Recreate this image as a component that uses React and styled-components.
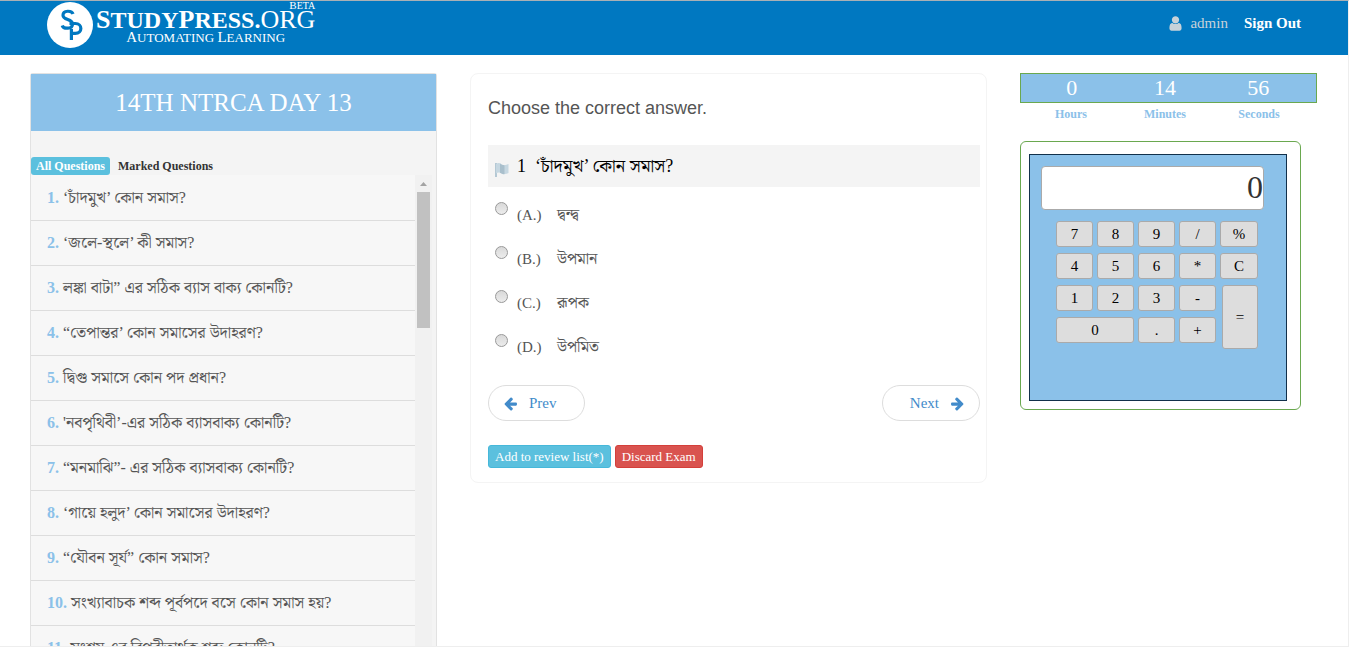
import React, { useState } from 'react';
import styled, { createGlobalStyle } from 'styled-components';

const SKY = '#8bc1e9';
const SERIF = '"Liberation Serif", "Noto Serif Bengali", "Noto Sans Bengali", "Noto Sans", serif';

const GlobalStyle = createGlobalStyle`
  *, *::before, *::after { box-sizing: border-box; }
  body { margin: 0; background: #fff; color: #555; font: 15px/20px ${SERIF}; }
  button, input { font-family: inherit; margin: 0; }
  button { cursor: pointer; }
  a { text-decoration: none; color: inherit; }
  ul, ol, fieldset { list-style: none; margin: 0; padding: 0; border: 0; min-width: 0; }
  h1, h2, p { margin: 0; font-weight: 400; }
`;

const Page = styled.div`
  display: flex;
  flex-direction: column;
  height: 100vh;
  overflow: hidden;
  border-top: 1px solid #a9b0b5;
  border-right: 1px solid #eee;
  border-bottom: 1px solid #eee;
`;

const Header = styled.header`
  display: flex;
  justify-content: space-between;
  align-items: flex-start;
  flex: none;
  height: 54px;
  padding: 0 47px;
  background: #0078c1;
  color: #fff;
`;

const Logo = styled.a`
  display: flex;
  gap: 3px;
`;

const LogoMark = styled.svg`
  width: 46px;
  height: 46px;
  margin-top: 1px;
`;

const Wordmark = styled.span`
  display: flex;
  flex-direction: column;
  text-transform: uppercase;
  white-space: nowrap;
`;

const Beta = styled.span`
  align-self: flex-end;
  font-size: 10px;
  line-height: 9px;
  &::first-letter { font-size: 11px; }
`;

const BrandName = styled.span`
  font-size: 24px;
  line-height: 20px;
  height: 20px;
`;

const BrandBold = styled.b`
  font-weight: 700;
`;

const Cap = styled.span`
  font-size: ${(p) => p.$size}px;
`;

const Tagline = styled.span`
  align-self: center;
  font-size: 13px;
  line-height: 14px;
`;

const UserNav = styled.nav`
  display: flex;
  align-items: center;
  gap: 16px;
  padding-top: 12px;
`;

const UserLink = styled.a`
  display: flex;
  align-items: center;
  gap: 6px;
  color: #c8d2d9;
`;

const SignOut = styled.a`
  font-weight: 700;
`;

const Icon = styled.svg`
  width: ${(p) => p.$size}px;
  height: ${(p) => p.$size}px;
  fill: currentColor;
`;

const Columns = styled.main`
  display: grid;
  grid-template-columns: 407fr 517fr 297fr;
  gap: 33px;
  flex: 1;
  min-height: 0;
  padding: 18px 31px 0 30px;
`;

const Sidebar = styled.aside`
  display: flex;
  flex-direction: column;
  min-height: 0;
  border: 1px solid #e2e2e2;
  border-bottom: 0;
  border-radius: 3px 3px 0 0;
  background: #f4f4f4;
`;

const ExamTitle = styled.h1`
  flex: none;
  background: ${SKY};
  color: #fff;
  font-size: 25px;
  line-height: 57px;
  text-align: center;
`;

const Tabs = styled.div`
  display: flex;
  flex: none;
  gap: 3px;
  margin-top: 26px;
`;

const Tab = styled.button`
  height: 18px;
  padding: 0 5px;
  border: 0;
  border-radius: 3px;
  background: ${(p) => (p.$active ? '#5bc0de' : 'transparent')};
  color: ${(p) => (p.$active ? '#fff' : '#333')};
  font-size: 12px;
  font-weight: 700;
  line-height: 16px;
`;

const ListArea = styled.div`
  display: flex;
  flex: 1;
  min-height: 0;
  margin-right: 4px;
`;

const QuestionList = styled.ol`
  flex: 1;
  min-width: 0;
  overflow: hidden;
  padding-top: 1px;
  background: #f7f7f7;
`;

const QuestionItem = styled.li`
  height: 45px;
  padding: 0 16px;
  border-bottom: 1px solid #ddd;
  font-size: 16px;
  line-height: 44px;
  white-space: nowrap;
`;

const QuestionNumber = styled.b`
  color: ${SKY};
`;

const ScrollTrack = styled.div`
  flex: none;
  display: flex;
  flex-direction: column;
  align-items: center;
  width: 17px;
  background: #f1f1f1;
`;

const ScrollArrow = styled.svg`
  width: 17px;
  height: 17px;
  fill: #a3a3a3;
`;

const ScrollThumb = styled.div`
  width: 13px;
  height: 136px;
  background: #c1c1c1;
`;

const ExamCard = styled.section`
  align-self: start;
  padding: 24px 6px 14px 17px;
  border: 1px solid #f4f4f4;
  border-radius: 8px;
`;

const Instruction = styled.h2`
  margin-bottom: 27px;
  font-family: "Liberation Sans", sans-serif;
  font-size: 18px;
  line-height: 20px;
`;

const QuestionBar = styled.div`
  display: flex;
  align-items: center;
  height: 42px;
  padding-left: 6px;
  background: #f4f4f4;
  color: #000;
  font-size: 18px;
`;

const Flag = styled.svg`
  width: 15px;
  height: 16px;
  margin: 8px 8px 0 0;
`;

const QuestionIndex = styled.span`
  width: 18px;
`;

const Option = styled.label`
  display: flex;
  align-items: center;
  height: 44px;
  padding-left: 7px;
`;

const Radio = styled.input`
  appearance: none;
  align-self: flex-start;
  width: 13px;
  height: 13px;
  margin: 15px 9px 0 0;
  border: 1px solid #999;
  border-radius: 50%;
  background: linear-gradient(#d9d9d9, #ececec);
  &:checked { background: radial-gradient(#333 3px, #e4e4e4 4px); }
`;

const OptionLetter = styled.span`
  width: 40px;
  padding-top: 12px;
`;

const OptionText = styled.span`
  padding-top: 12px;
  font-size: 16px;
`;

const Pager = styled.div`
  display: flex;
  justify-content: space-between;
  margin-top: 22px;
`;

const PagerButton = styled.button`
  display: flex;
  align-items: center;
  gap: 11px;
  height: 36px;
  padding: ${(p) => (p.$next ? '0 14px 0 27px' : '0 27px 0 14px')};
  border: 1px solid #ddd;
  border-radius: 18px;
  background: #fff;
  color: #428bca;
  font-size: 15px;
`;

const Actions = styled.div`
  display: flex;
  gap: 4px;
  margin-top: 24px;
`;

const ActionButton = styled.button`
  height: 23px;
  padding: 0 6px;
  border: 1px solid ${(p) => (p.$danger ? '#d43f3a' : '#46b8da')};
  border-radius: 3px;
  background: ${(p) => (p.$danger ? '#d9534f' : '#5bc0de')};
  color: #fff;
  font-size: 13px;
  line-height: 20px;
`;

const Tools = styled.section`
  align-self: start;
`;

const TimerRow = styled.div`
  display: grid;
  grid-template-columns: repeat(3, 1fr);
  padding: 0 11px 0 4px;
  text-align: center;
`;

const TimerValues = styled(TimerRow)`
  border: 1px solid #6aa84f;
  background: ${SKY};
  color: #fff;
  font-size: 22px;
  line-height: 28px;
`;

const TimerLabels = styled(TimerRow)`
  color: ${SKY};
  font-size: 12px;
  font-weight: 700;
  line-height: 22px;
`;

const CalculatorFrame = styled.div`
  width: fit-content;
  margin-top: 16px;
  padding: 12px 13px 8px 8px;
  border: 1px solid #6aa84f;
  border-radius: 6px;
`;

const Calculator = styled.div`
  width: 258px;
  padding: 11px 22px 51px 11px;
  border: 1px solid #12304a;
  background: ${SKY};
`;

const Display = styled.input`
  display: block;
  width: 100%;
  height: 44px;
  padding: 0 0 2px;
  border: 1px solid #aaa;
  border-radius: 4px;
  background: #fff;
  color: #333;
  font-size: 32px;
  text-align: right;
`;

const Keypad = styled.div`
  display: grid;
  grid-template-columns: repeat(4, 37px) 38px;
  grid-template-rows: repeat(4, 26px) 0;
  gap: 6px 4px;
  margin: 11px 0 0 15px;
`;

const Key = styled.button`
  grid-column: ${(p) => (p.$tall ? '5' : p.$wide ? '1 / span 2' : 'auto')};
  grid-row: ${(p) => (p.$tall ? '3 / span 3' : 'auto')};
  margin-left: ${(p) => (p.$tall ? '2px' : '0')};
  padding: 0;
  border: 1px solid #aaa;
  border-radius: 3px;
  background: #ddd;
  color: #000;
  font-size: 15px;
  line-height: 24px;
`;

const questions = [
  '‘চাঁদমুখ’ কোন সমাস?',
  '‘জলে-স্থলে’ কী সমাস?',
  'লঙ্কা বাটা” এর সঠিক ব্যাস বাক্য কোনটি?',
  '“তেপান্তর’ কোন সমাসের উদাহরণ?',
  'দ্বিগু সমাসে কোন পদ প্রধান?',
  "'নবপৃথিবী’-এর সঠিক ব্যাসবাক্য কোনটি?",
  '“মনমাঝি”- এর সঠিক ব্যাসবাক্য কোনটি?',
  '‘গায়ে হলুদ’ কোন সমাসের উদাহরণ?',
  '“যৌবন সূর্য” কোন সমাস?',
  'সংখ্যাবাচক শব্দ পূর্বপদে বসে কোন সমাস হয়?',
  'সংশয় এর বিপরীতার্থক শব্দ কোনটি?',
];

const options = [
  ['A', 'দ্বন্দ্ব'],
  ['B', 'উপমান'],
  ['C', 'রূপক'],
  ['D', 'উপমিত'],
];

const timer = [['0', 'Hours'], ['14', 'Minutes'], ['56', 'Seconds']];

const keys = ['7', '8', '9', '/', '%', '4', '5', '6', '*', 'C', '1', '2', '3', '-', '=', '0', '.', '+'];

const ARROW =
  'M1664 896v128q0 53-32.5 90.5t-84.5 37.5h-704l293 294q38 36 38 90t-38 90l-75 76q-37 37-90 37-52 0-91-37l-651-652q-37-37-37-90 0-52 37-91l651-650q38-38 91-38 52 0 90 38l75 74q38 38 38 91t-38 91l-293 293h704q52 0 84.5 37.5t32.5 90.5z';

const USER =
  'M1536 1399q0 109-62.5 187t-150.5 78h-854q-88 0-150.5-78t-62.5-187q0-85 8.5-160.5t31.5-152 58.5-131 94-89 134.5-34.5q131 128 313 128t313-128q76 0 134.5 34.5t94 89 58.5 131 31.5 152 8.5 160.5zm-256-887q0 159-112.5 271.5t-271.5 112.5-271.5-112.5-112.5-271.5 112.5-271.5 271.5-112.5 271.5 112.5 112.5 271.5z';

function SiteHeader() {
  return (
    <Header>
      <Logo href="#home">
        <LogoMark viewBox="0 0 46 46" aria-hidden="true">
          <circle cx="23" cy="23" r="23" fill="#fff" />
          <g fill="none" stroke="#0078c1" strokeWidth="3.2">
            <path d="M26 12C25 8.500 16 7.800 16 13.300c0 5.300 9.500 3.200 9.500 8.600 0 5.500-9 5.400-10.300 1.500" />
            <path d="M24.400 38V27M22.500 21.500h5.800c7.400 0 7.400 9.800 0 9.800h-4" />
          </g>
        </LogoMark>
        <Wordmark>
          <Beta>Beta</Beta>
          <BrandName>
            <BrandBold><Cap $size={26}>S</Cap>tudy<Cap $size={26}>P</Cap>ress.</BrandBold>
            <Cap $size={26}>org</Cap>
          </BrandName>
          <Tagline><Cap $size={15}>A</Cap>utomating <Cap $size={15}>L</Cap>earning</Tagline>
        </Wordmark>
      </Logo>
      <UserNav>
        <UserLink href="#profile">
          <Icon $size={17} viewBox="0 0 1792 1792" aria-hidden="true"><path d={USER} /></Icon>
          admin
        </UserLink>
        <SignOut href="#signout">Sign Out</SignOut>
      </UserNav>
    </Header>
  );
}

function QuestionSidebar() {
  const [tab, setTab] = useState('all');
  return (
    <Sidebar>
      <ExamTitle>14TH NTRCA DAY 13</ExamTitle>
      <Tabs>
        <Tab $active={tab === 'all'} onClick={() => setTab('all')}>All Questions</Tab>
        <Tab $active={tab === 'marked'} onClick={() => setTab('marked')}>Marked Questions</Tab>
      </Tabs>
      <ListArea>
        <QuestionList>
          {questions.map((q, i) => (
            <QuestionItem key={q}>
              <QuestionNumber>{i + 1}.</QuestionNumber> {q}
            </QuestionItem>
          ))}
        </QuestionList>
        <ScrollTrack aria-hidden="true">
          <ScrollArrow viewBox="0 0 17 17"><path d="M5 11l3.5-4 3.5 4z" /></ScrollArrow>
          <ScrollThumb />
        </ScrollTrack>
      </ListArea>
    </Sidebar>
  );
}

function ExamPanel() {
  return (
    <ExamCard>
      <Instruction>Choose the correct answer.</Instruction>
      <QuestionBar>
        <Flag viewBox="0 0 15 16" aria-hidden="true">
          <path d="M2 1v14" stroke="#b4c8d4" strokeWidth="2" />
          <path d="M2 2c2-1.400 4-1 5.500.3S12 3.400 14.500 2v9c-2 1.300-5 1.400-7 .3S4 10.200 2 11.500z" fill="#c6d7e1" />
          <path d="M6 1.500c1.200.9 2.400 1.700 4.500 1.700v9c-2 0-3.300-.6-4.500-1.500z" fill="#a9bfcc" />
        </Flag>
        <QuestionIndex>1</QuestionIndex>
        <span>{questions[0]}</span>
      </QuestionBar>
      <fieldset aria-label={questions[0]}>
        {options.map(([letter, text]) => (
          <Option key={letter}>
            <Radio type="radio" name="answer" value={letter} />
            <OptionLetter>({letter}.)</OptionLetter>
            <OptionText>{text}</OptionText>
          </Option>
        ))}
      </fieldset>
      <Pager>
        <PagerButton>
          <Icon $size={15} viewBox="0 0 1792 1792" aria-hidden="true"><path d={ARROW} /></Icon>
          Prev
        </PagerButton>
        <PagerButton $next>
          Next
          <Icon $size={15} viewBox="0 0 1792 1792" aria-hidden="true">
            <path d={ARROW} transform="translate(1792 0) scale(-1 1)" />
          </Icon>
        </PagerButton>
      </Pager>
      <Actions>
        <ActionButton>Add to review list(*)</ActionButton>
        <ActionButton $danger>Discard Exam</ActionButton>
      </Actions>
    </ExamCard>
  );
}

function ToolPanel() {
  return (
    <Tools>
      <TimerValues>{timer.map(([value, label]) => <span key={label}>{value}</span>)}</TimerValues>
      <TimerLabels>{timer.map(([, label]) => <span key={label}>{label}</span>)}</TimerLabels>
      <CalculatorFrame>
        <Calculator>
          <Display aria-label="Result" value="0" readOnly />
          <Keypad>
            {keys.map((k) => (
              <Key key={k} $wide={k === '0'} $tall={k === '='}>{k}</Key>
            ))}
          </Keypad>
        </Calculator>
      </CalculatorFrame>
    </Tools>
  );
}

export default function App() {
  return (
    <Page>
      <GlobalStyle />
      <SiteHeader />
      <Columns>
        <QuestionSidebar />
        <ExamPanel />
        <ToolPanel />
      </Columns>
    </Page>
  );
}
